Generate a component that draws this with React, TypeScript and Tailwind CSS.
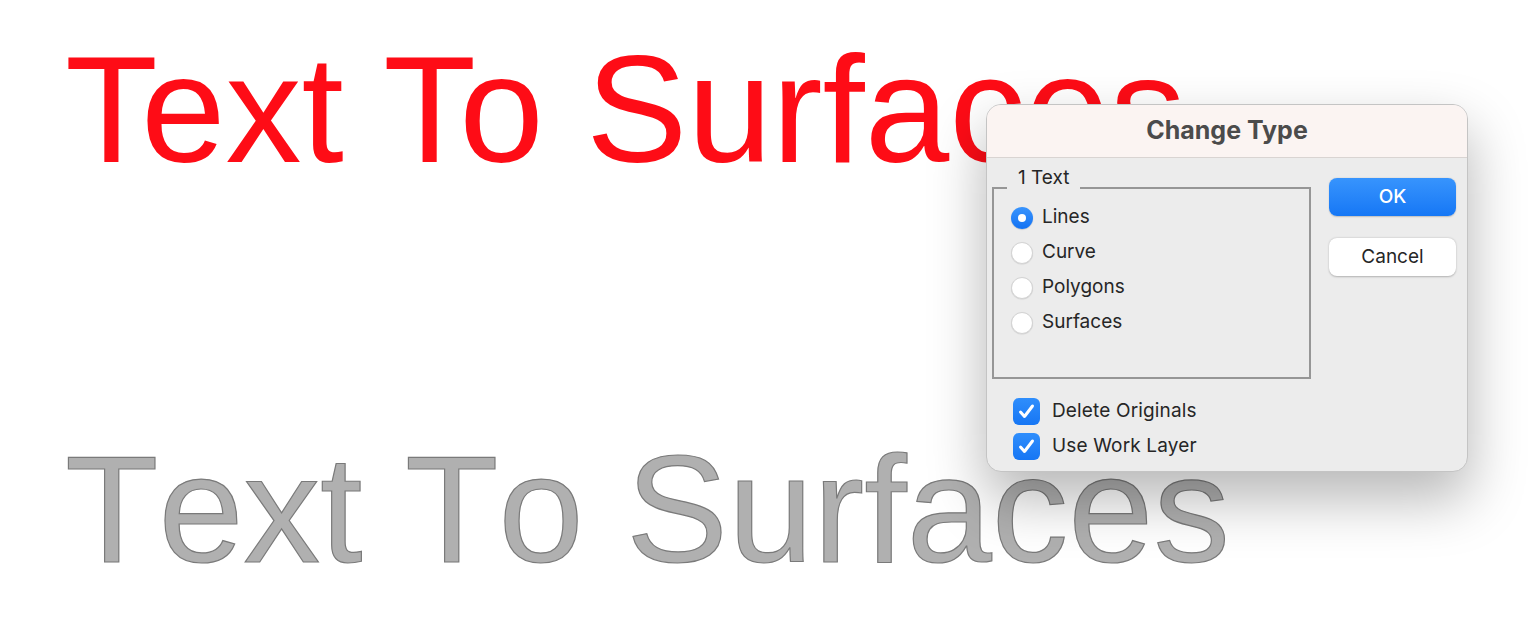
import * as React from "react";

const ui = "font-['Inter','Noto_Sans',sans-serif]";

function Radio({ label, checked }: { label: string; checked?: boolean }) {
  return (
    <div className="flex h-[35px] items-center">
      {checked ? (
        <span className="flex h-[22px] w-[22px] items-center justify-center rounded-full bg-gradient-to-b from-[#3894fd] to-[#1272f3] shadow-[0_0.5px_1px_rgba(0,0,0,0.25)]">
          <span className="h-[8px] w-[8px] rounded-full bg-white" />
        </span>
      ) : (
        <span className="h-[22px] w-[22px] rounded-full border border-[#d3d3d3] bg-white shadow-[0_0.5px_1px_rgba(0,0,0,0.12)]" />
      )}
      <span className="ml-[9px] text-[19px] text-[#262626]">{label}</span>
    </div>
  );
}

function Check({ label }: { label: string }) {
  return (
    <div className="flex h-[35px] items-center">
      <span className="flex h-[27px] w-[27px] items-center justify-center rounded-[6px] bg-gradient-to-b from-[#2f8efc] to-[#1676f4]">
        <svg width="19" height="19" viewBox="0 0 19 19" fill="none">
          <path d="M3.5 10l4 4.5L15.5 4" stroke="white" strokeWidth="3" strokeLinecap="round" strokeLinejoin="round" />
        </svg>
      </span>
      <span className="ml-[12px] text-[19px] tracking-[0.15px] text-[#262626]">{label}</span>
    </div>
  );
}

export default function App() {
  return (
    <div className="relative h-[619px] w-[1530px] overflow-hidden bg-white">
      {/* canvas text */}
      <div className="flex flex-col pl-[65px] pt-[33px] font-['Liberation_Sans','Arial',sans-serif]">
        <div className="whitespace-nowrap text-[152px] leading-none text-[#fe0c16]">Text To Surfaces</div>
        <div className="mt-[247px] whitespace-nowrap text-[153px] leading-none text-[#b0b0b0] [font-kerning:none] [-webkit-text-stroke:1.2px_#7a7a7a]">
          Text To Surfaces
        </div>
      </div>

      {/* Change Type dialog */}
      <div
        className={`absolute left-[986px] top-[104px] flex h-[368px] w-[482px] flex-col overflow-hidden rounded-[15px] border border-[#c4c4c4] bg-[#ececec] shadow-[0_26px_55px_2px_rgba(0,0,0,0.28)] ${ui}`}
      >
        <div className="flex h-[53px] items-center justify-center border-b border-[#d9d4d2] bg-[#fbf4f2] text-[25px] font-bold text-[#4b4b4b]">
          Change Type
        </div>
        <div className="flex flex-1 flex-col">
          <div className="flex pl-[5px] pr-[10px]">
            <div className="pt-[18px]">
              <fieldset className="w-[319px] border-2 border-[#969696] pb-[37px] pl-[17px]">
                <legend className="ml-[-4px] px-[11px] text-[19px] leading-[24px] text-[#262626]">
                  <span className="relative top-[-10px]">1 Text</span>
                </legend>
                <Radio label="Lines" checked />
                <Radio label="Curve" />
                <Radio label="Polygons" />
                <Radio label="Surfaces" />
              </fieldset>
            </div>
            <div className="ml-[18px] flex w-[127px] flex-col gap-[22px] pt-[20px]">
              <button className="h-[38px] rounded-[8px] bg-gradient-to-b from-[#3794fd] to-[#1577f5] text-[19px] font-medium text-white shadow-[0_0.5px_1.5px_rgba(0,0,0,0.2)]">
                OK
              </button>
              <button className="h-[38px] rounded-[8px] bg-white text-[19px] text-[#262626] shadow-[0_0.5px_2px_rgba(0,0,0,0.25)]">
                Cancel
              </button>
            </div>
          </div>
          <div className="mt-[15px] flex flex-col pl-[26px]">
            <Check label="Delete Originals" />
            <Check label="Use Work Layer" />
          </div>
        </div>
      </div>
    </div>
  );
}
